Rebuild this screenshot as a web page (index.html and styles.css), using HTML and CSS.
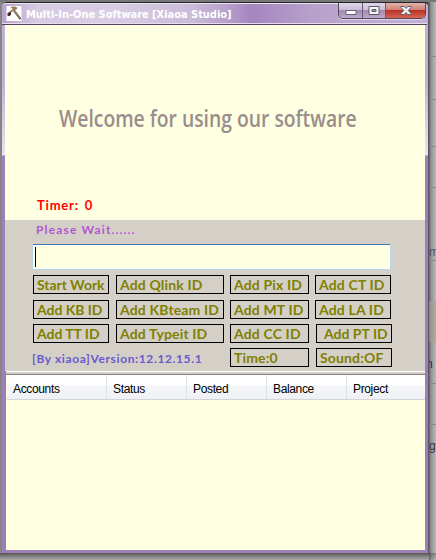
FILE: index.html
```html
<!DOCTYPE html>
<html lang="en">
<head>
<meta charset="utf-8">
<title>Multi-In-One Software</title>
<link rel="stylesheet" href="styles.css">
</head>
<body>
<div class="desktop">
  <i class="rule r1"></i><i class="rule r2"></i><i class="rule r3"></i><i class="rule r4"></i><i class="rule r5"></i><i class="rule r6"></i><i class="band"></i>
  <span class="behind b1">m</span><span class="behind b2">n</span><span class="behind b3">g</span><i class="rule r7"></i>
  <main class="window">
    <header class="titlebar">
      <svg class="appicon" viewBox="0 0 16 16"><path fill="#fff" d="M0 0h16v16H0z"/><path d="M8 5l7 9" stroke="#6b5040" stroke-width="2.2"/><path d="M8 5l6.500 8" stroke="#c5a88e" stroke-width=".7"/><path d="M4 1.500Q8-.5 12 2l-2 2Q7 5 5 7L3 9 1 8Q4 5 7 3z" fill="#9a7a59"/><path d="M1 8l3-2 1 3-2 2-2-1z" fill="#382720"/></svg>
      <h1 class="title">Multi-In-One Software [Xiaoa Studio]</h1>
      <div class="controls">
        <span class="ctl min"><svg viewBox="0 0 12 10"><path d="M1 4.500h10v4H1z" fill="#fff" stroke="#6b6478"/></svg></span>
        <span class="ctl max"><svg viewBox="0 0 12 10"><path d="M1 .5h10v8H1z" fill="#f7f7f7" stroke="#5e5968"/><path d="M4 3.500h4v2H4z" fill="#a7a0b5" stroke="#5e5968"/></svg></span>
        <span class="ctl close"><svg viewBox="0 0 12 10"><path d="M1 .5h3.200L6 2.500 7.800.5H11v1L8.200 4.500 11 7.500v1H7.800L6 6.500l-1.800 2H1v-1l2.800-3L1 1.500z" fill="#f5f5f8" stroke="#5e6075"/></svg></span>
      </div>
    </header>
    <div class="client">
      <section class="hero">
        <h2 class="welcome"><span>Welcome for using our software</span></h2>
        <p class="timer">Timer: 0</p>
      </section>
      <section class="panel">
        <p class="wait">Please Wait......</p>
        <div class="field"><i class="caret"></i></div>
        <div class="buttons">
          <div class="row"><span class="btn">Start Work</span><span class="btn b">Add Qlink ID</span><span class="btn c">Add Pix ID</span><span class="btn">Add CT ID</span></div>
          <div class="row"><span class="btn">Add KB ID</span><span class="btn b">Add KBteam ID</span><span class="btn c">Add MT ID</span><span class="btn">Add LA ID</span></div>
          <div class="row"><span class="btn">Add TT ID</span><span class="btn b">Add Typeit ID</span><span class="btn c">Add CC ID</span><span class="btn shift pt">Add PT ID</span></div>
          <div class="row"><p class="version">[By xiaoa]Version:12.12.15.1</p><span class="btn c">Time:0</span><span class="btn shift">Sound:OF</span></div>
        </div>
      </section>
      <section class="list">
        <div class="head"><span class="first">Accounts</span><span>Status</span><span>Posted</span><span>Balance</span><span class="last">Project</span></div>
      </section>
    </div>
  </main>
</div>
</body>
</html>
```

FILE: styles.css
```css
* { box-sizing: border-box; }
body { margin: 0; overflow: hidden; }
h1, h2, p { margin: 0; font-weight: bold; white-space: nowrap; }
.desktop {
  position: relative; width: 436px; height: 560px; padding: 2px 8px 7px 2px;
  background:
    linear-gradient(#777 0, #777 2px, transparent 2px),
    linear-gradient(transparent 553px, #555 553px, #7d7d7d 556px, #aaa 560px) 0 0 / 429px 100% no-repeat,
    linear-gradient(transparent 553px, #0004 553px, #0000 560px),
    linear-gradient(90deg, #858585 2px, #4b4b4b 428px, #929292 431px, #bababa 436px);
}
.rule { position: absolute; left: 429px; width: 7px; height: 1px; background: #8a8a8a; }
.r1 { top: 56px; } .r2 { top: 99px; } .r3 { top: 146px; } .r4 { top: 187px; } .r5 { top: 260px; } .r6 { top: 383px; } .r7 { top: 424px; }
.band { position: absolute; left: 429px; top: 301px; width: 7px; height: 41px; background: #a49f8f88; }
.behind { position: absolute; left: 429px; width: 7px; overflow: hidden; font: 12px/14px "Liberation Sans", sans-serif; color: #333; }
.b1 { top: 245px; color: #555; } .b2 { top: 357px; color: #226; text-indent: -3px; } .b3 { top: 439px; }
.window {
  position: relative; width: 427px; height: 551px; padding: 0 4px 3px 3px;
  border-top: 1px solid #252329; border-right: 1px solid #5c5366; border-radius: 5px 5px 1px 1px;
  background: linear-gradient(#c3b1d4 0, #c3b1d4 80px, #e9e2ef 152px, #9e80b6 153px);
}
.titlebar {
  display: flex; height: 22px; margin: 0 -3px 0 -3px; padding: 3px 2px 0 4px;
  border-top: 1px solid #eee8f5; border-radius: 4px 4px 0 0;
  box-shadow: inset 0 -1px #55405f, inset 0 -2px #e6dcee;
  background: linear-gradient(90deg, #b9a2cc 0, #d6cbe2 35px, #d8cde4 110px, #cabbd9 190px, #b79fcb 225px, #a586be 250px, #b7a1cb 310px, #c3b1d4 425px);
}
.appicon { width: 16px; height: 15px; flex: none; margin-top: -1px; }
.title { margin-left: 4px; font: bold 11px/15px "DejaVu Sans Condensed", "DejaVu Sans", sans-serif; color: #fff; letter-spacing: -.03px; width: 312px; flex: none; }
.controls { display: flex; width: 88px; height: 16px; margin-top: -4px; border: 1px solid #51485c; border-top: 0; border-radius: 0 0 5px 5px; overflow: hidden; flex: none; box-shadow: 0 1px #ddd2e7; }
.ctl { display: flex; align-items: center; justify-content: center; width: 24px; flex: none; background: linear-gradient(#dfd6e7 0, #cabbd7 48%, #a18cb3 50%, #bca9cc); border-right: 1px solid #685a75; }
.ctl svg { width: 12px; height: 10px; }
.ctl.max { width: 23px; }
.ctl.close { width: 39px; border: 0; background: linear-gradient(#dfb4ac 0, #d17e74 48%, #b93329 50%, #d76552); }
.client { width: 420px; height: 525px; background: #ffffe1; overflow: hidden; }
.hero { height: 195px; padding: 77px 0 0 54px; }
.welcome { height: 32px; font: 600 24px/32px "Open Sans", sans-serif; color: #9a8d8d; }
.welcome span { display: inline-block; transform-origin: 0 50%; transform: scaleX(.805); }
.timer, .wait, .version { font-family: "Comic Sans MS", "Lato", sans-serif; }
.timer { margin: 63px 0 0 -22px; font-size: 13px; line-height: 16px; color: #f00; letter-spacing: .8px; word-spacing: 2px; }
.panel { height: 151px; padding: 2px 28px 0; background: #d4d0c8; }
.wait { height: 22px; padding-left: 3px; font-size: 12px; line-height: 16px; color: #b755d4; letter-spacing: 1.15px; }
.field { width: 359px; height: 26px; margin-left: -1px; padding: 2px; background: #ffffe1; border: 1px solid #b5d5ec; border-top-color: #3d7bad; border-radius: 2px; box-shadow: inset 0 0 0 1px #fffff5; }
.caret { display: block; width: 1px; height: 20px; background: #000; }
.buttons { padding-top: 5px; }
.row { display: flex; height: 24px; }
.row:first-child { height: 25px; }
.btn { flex: none; width: 76px; height: 19px; border: 1px solid #000; margin-right: 6px; padding-left: 3px; font: bold 14px/17px "Lato", sans-serif; color: #808000; letter-spacing: .15px; white-space: nowrap; }
.row .btn:first-child { margin-right: 7px; letter-spacing: -.05px; }
.b { width: 108px; }
.c { width: 79px; }
.btn.shift { margin-left: 1px; }
.btn.pt { padding-left: 7px; letter-spacing: 0; }
.version { width: 198px; margin-left: -1px; padding-right: 1px; flex: none; font-size: 12px; line-height: 21px; color: #6959cd; letter-spacing: .62px; }
.list { height: 179px; border-left: 1px solid #888; box-shadow: inset 0 1px #fff; padding-top: 4px; background: linear-gradient(#d4d0c8 3px, #808080 3px, #808080 4px, #ffffe1 4px); }
.head { display: flex; height: 25px; margin-left: 1px; background: linear-gradient(#fff 10px, #f5f6f8 11px, #eff1f4); border-bottom: 1px solid #d2d5d9; font: 12px/28px "Liberation Sans", sans-serif; color: #000; }
.head span { width: 80px; height: 24px; padding-left: 6px; border-right: 1px solid #dfe2e5; letter-spacing: -.35px; }
.head .first { width: 100px; }
.head .last { flex: 1; border: 0; }
```
